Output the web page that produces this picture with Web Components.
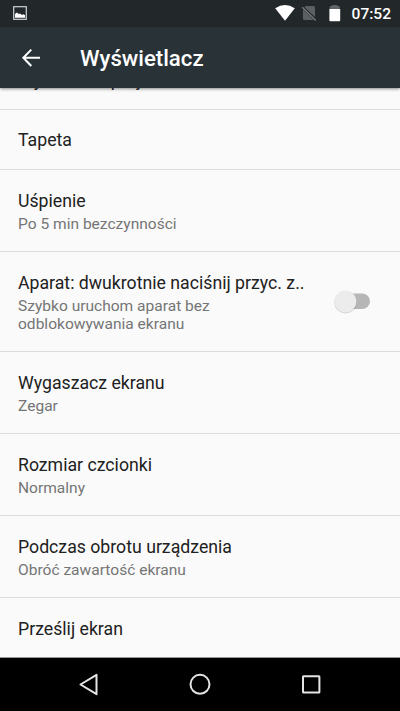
<!DOCTYPE html>
<html lang="pl">
<head>
<meta charset="utf-8">
<title>Wyświetlacz</title>
<style>
html, body { margin: 0; height: 100%; }
body { font-family: Roboto, "Noto Sans", sans-serif; overflow: hidden; }
</style>
</head>
<body>
<display-settings></display-settings>
<script>
const define = (name, html) => customElements.define(name, class extends HTMLElement {
  constructor() {
    super();
    this.attachShadow({ mode: 'open' }).innerHTML = html;
  }
});

define('status-bar', `
<style>
:host { display: flex; align-items: center; height: 27px; box-sizing: border-box; background: #22272a; color: #fff; padding: 0 9px 0 12px; }
svg { display: block; flex: none; }
.sys { margin-left: auto; }
time { font-size: 15.56px; font-weight: 500; line-height: 27px; margin-left: 9px; padding-top: 1px; }
</style>
<svg width="16" height="27"><rect x="1.7" y="6.7" width="12.6" height="12.6" fill="none" stroke="#d0d3d4" stroke-width="1.2"/><path d="M3 17.8V14l1.8-1.4 2 1.5 1.2-.6 2 1.4 1.4-.6 1.7 1v2.5z" fill="#fff"/></svg>
<svg class="sys" width="70" height="27">
<path d="M2.200 8.2Q12 1.8 21.800 8.2L12 20.7z" fill="#fff"/>
<path d="M32.800 6H40.500q1.500 0 1.500 1.500V17L31.500 7.300zM30 9.300L40.500 20H31.500q-1.500 0-1.500-1.500z" fill="#5c6062"/><path d="M29.300 7.300L42.700 20.500" stroke="#7c7f80" stroke-width="1.200"/>
<path d="M56.700 9V7q0-1 1-1h1.500V5h5v1h1.500q1 0 1 1v2z" fill="#606466"/><path d="M56.400 9h10.800v11.300q0 1-1 1h-8.800q-1 0-1-1z" fill="#fff"/>
</svg>
<time>07:52</time>`);

define('app-bar', `
<style>
:host { display: flex; align-items: center; height: 61px; background: #283237; color: #fff; position: relative; z-index: 1; box-shadow: 0 1px 3px rgba(0,0,0,.45); }
svg { display: block; margin-left: 18px; }
h1 { margin: 0 0 0 36px; padding-top: 1px; font-size: 22.2px; font-weight: 500; line-height: 26px; }
</style>
<svg width="26" height="26"><path d="M22 12.800H6M13.300 4.600L5.300 12.800l8 8.200" fill="none" stroke="#fff" stroke-width="2"/></svg>
<h1><slot></slot></h1>`);

define('toggle-switch', `
<style>
:host { display: block; flex: none; }
svg { display: block; overflow: visible; }
</style>
<svg width="38" height="26"><rect x="7" y="4.500" width="29" height="15.500" rx="7.750" fill="#b6b6b6"/><circle cx="11.500" cy="13.200" r="11.200" fill="#000" opacity=".16"/><circle cx="11.500" cy="12.500" r="10.900" fill="#ececec"/></svg>`);

define('setting-row', `
<style>
:host { display: flex; box-sizing: border-box; align-items: center; height: 82px; padding: 2px 28px 0 18px; border-bottom: 1px solid #dcdcdc; }
.text { flex: 1; min-width: 0; }
.title { font-size: 17.7px; line-height: 23px; color: #212121; white-space: nowrap; }
.summary { font-size: 15.56px; line-height: 18px; color: #757575; }
.summary ::slotted(*) { display: block; margin-top: 2px; }
</style>
<div class="text"><div class="title"><slot></slot></div><div class="summary"><slot name="summary"></slot></div></div><slot name="control"></slot>`);

define('nav-bar', `
<style>
:host { display: flex; justify-content: center; gap: 85px; align-items: center; height: 53.500px; background: #000; flex: none; }
svg { display: block; fill: none; stroke: #e4e4e4; stroke-width: 2; }
</style>
<svg width="26" height="26"><path d="M20.500 3.800v19.400L4.500 13.500z" stroke-linejoin="round"/></svg>
<svg width="26" height="26"><circle cx="13" cy="13.300" r="9.500"/></svg>
<svg width="26" height="26"><rect x="5" y="5.200" width="16.400" height="16.400" rx=".5"/></svg>`);

define('display-settings', `
<style>
:host { display: flex; flex-direction: column; height: 711px; width: 400px; background: #fafafa; }
main { flex: 1; min-height: 0; overflow: hidden; display: flex; flex-direction: column; justify-content: flex-end; }
setting-row { flex: none; }
.single { height: 60px; padding-top: 3px; }
.clipped { height: 61px; padding-top: 3px; }
.tall { height: 100px; }
.last { height: 60px; padding-top: 4px; border-bottom-color: #999; }
</style>
<status-bar></status-bar>
<app-bar>Wyświetlacz</app-bar>
<main>
<setting-row class="clipped">Wyciszanie przy</setting-row>
<setting-row class="single">Tapeta</setting-row>
<setting-row>Uśpienie<span slot="summary">Po 5 min bezczynności</span></setting-row>
<setting-row class="tall">Aparat: dwukrotnie naciśnij przyc. z..<span slot="summary">Szybko uruchom aparat bez<br>odblokowywania ekranu</span><toggle-switch slot="control"></toggle-switch></setting-row>
<setting-row>Wygaszacz ekranu<span slot="summary">Zegar</span></setting-row>
<setting-row>Rozmiar czcionki<span slot="summary">Normalny</span></setting-row>
<setting-row>Podczas obrotu urządzenia<span slot="summary">Obróć zawartość ekranu</span></setting-row>
<setting-row class="last">Prześlij ekran</setting-row>
</main>
<nav-bar></nav-bar>`);
</script>
</body>
</html>
